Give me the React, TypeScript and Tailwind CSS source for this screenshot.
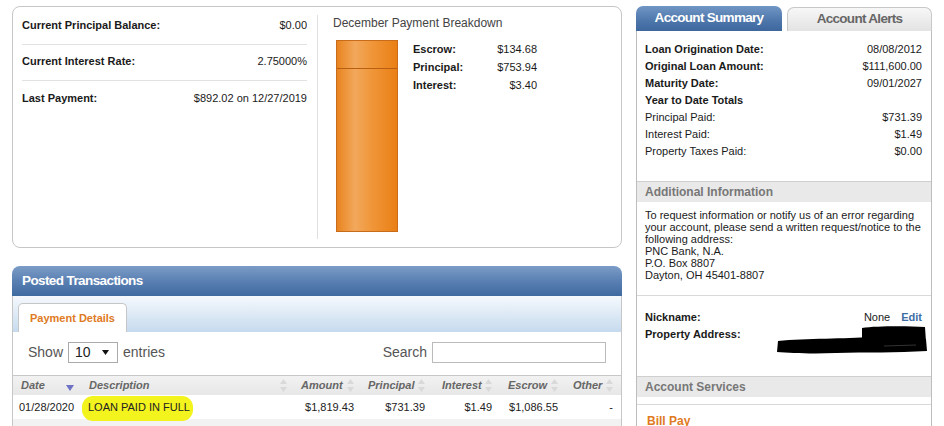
import React from 'react';

const SortBoth = () => (
  <svg width="7" height="13" viewBox="0 0 7 13" className="shrink-0">
    <path d="M3.5 0 L7 5 L0 5 Z" fill="#d9d9d9" />
    <path d="M0 8 L7 8 L3.5 13 Z" fill="#d9d9d9" />
  </svg>
);

const SortDesc = () => (
  <svg width="8" height="6" viewBox="0 0 8 6" className="shrink-0 mt-[4px]">
    <path d="M0 0 L8 0 L4 6 Z" fill="#6d72c4" />
  </svg>
);

const OVERVIEW = [
  { label: 'Current Principal Balance:', value: '$0.00' },
  { label: 'Current Interest Rate:', value: '2.75000%' },
  { label: 'Last Payment:', value: '$892.02 on 12/27/2019' },
];

const BREAKDOWN = [
  { label: 'Escrow:', value: '$134.68' },
  { label: 'Principal:', value: '$753.94' },
  { label: 'Interest:', value: '$3.40' },
];

const SUMMARY = [
  { label: 'Loan Origination Date:', value: '08/08/2012', bold: true },
  { label: 'Original Loan Amount:', value: '$111,600.00', bold: true },
  { label: 'Maturity Date:', value: '09/01/2027', bold: true },
  { label: 'Year to Date Totals', value: '', bold: true },
  { label: 'Principal Paid:', value: '$731.39', bold: false },
  { label: 'Interest Paid:', value: '$1.49', bold: false },
  { label: 'Property Taxes Paid:', value: '$0.00', bold: false },
];

const COLUMNS = [
  { name: 'Date', w: 'w-[69px]', pl: 'pl-[8px]' },
  { name: 'Description', w: 'w-[213px]', pl: 'pl-[7px]' },
  { name: 'Amount', w: 'w-[67px]', pl: 'pl-[6px]' },
  { name: 'Principal', w: 'w-[71px]', pl: 'pl-[6px]' },
  { name: 'Interest', w: 'w-[67px]', pl: 'pl-[9px]' },
  { name: 'Escrow', w: 'w-[66px]', pl: 'pl-[8px]' },
  { name: 'Other', w: 'w-[55px]', pl: 'pl-[7px]' },
];

export default function App() {
  return (
    <div className="w-[944px] h-[426px] overflow-hidden bg-white flex gap-[14px] pl-[12px] pt-[6px] font-['Liberation_Sans',Arial,sans-serif] text-[11px] text-[#1a1a1a]">
      {/* Left column */}
      <div className="w-[610px] flex flex-col gap-[18px]">
        {/* Overview card */}
        <div className="h-[242px] border border-[#c6c6c6] rounded-[8px] flex">
          <div className="w-[304px] pl-[9px] pr-[10px] pt-[2px]">
            {OVERVIEW.map((row, i) => (
              <div
                key={row.label}
                className={`h-[36px] flex items-center justify-between pb-[2px] ${
                  i < OVERVIEW.length - 1 ? 'border-b border-[#e2e2e2]' : ''
                }`}
              >
                <span className="font-bold">{row.label}</span>
                <span>{row.value}</span>
              </div>
            ))}
          </div>
          <div className="my-[8px] border-l border-[#e0e0e0] pl-[15px] pt-[1px] flex-1">
            <div className="text-[12px] leading-[14px] text-[#444]">December Payment Breakdown</div>
            <div className="flex items-start mt-[10px]">
              <div className="ml-[3px] w-[62px] h-[192px] border border-[#c86c1c] flex flex-col bg-[linear-gradient(90deg,#e9841f_0%,#f2a85c_30%,#f0983c_55%,#ea7f15_100%)]">
                <div className="h-[28px] border-b border-[#b85f12]" />
                <div className="flex-1" />
              </div>
              <div className="ml-[15px] w-[124px]">
                {BREAKDOWN.map((row) => (
                  <div key={row.label} className="flex justify-between leading-[18px]">
                    <span className="font-bold">{row.label}</span>
                    <span>{row.value}</span>
                  </div>
                ))}
              </div>
            </div>
          </div>
        </div>

        {/* Posted transactions */}
        <div className="flex-1 flex flex-col rounded-t-[8px] overflow-hidden">
          <div className="h-[30px] shrink-0 flex items-center pl-[10px] bg-[linear-gradient(180deg,#7b9cc6_0%,#5a80b3_50%,#3f6aa0_100%)] text-white font-bold text-[13.5px] tracking-[-0.6px]">
            Posted Transactions
          </div>
          <div className="flex-1 border-x border-[#c6c6c6] flex flex-col">
            <div className="h-[36px] shrink-0 flex items-end pl-[5px] bg-[linear-gradient(180deg,#f5f9fd_0%,#c6daee_100%)]">
              <div className="w-[109px] h-[29px] bg-white border border-b-0 border-[#c6c6c6] rounded-t-[5px] flex items-center justify-center text-[#e07a22] font-bold">
                Payment Details
              </div>
            </div>
            <div className="flex items-center justify-between pt-[10px] pl-[15px] pr-[15px] text-[14px] text-[#555]">
              <div className="flex items-center">
                <span>Show</span>
                <div className="ml-[5px] w-[50px] h-[21px] border border-[#aaa] flex items-center justify-between pl-[6px] pr-[8px] text-[#222]">
                  <span>10</span>
                  <svg width="7" height="5" viewBox="0 0 7 5">
                    <path d="M0 0 L7 0 L3.5 5 Z" fill="#111" />
                  </svg>
                </div>
                <span className="ml-[5px]">entries</span>
              </div>
              <div className="flex items-center">
                <span>Search</span>
                <div className="ml-[5px] w-[174px] h-[21px] border border-[#bbb]" />
              </div>
            </div>
            <div className="mt-[12px] h-[20px] flex border-t border-[#c8c8c8] bg-[linear-gradient(180deg,#f2f2f2,#e7e7e7)] text-[#666] font-bold italic">
              {COLUMNS.map((c) => (
                <div key={c.name} className={`${c.w} ${c.pl} pr-[8px] flex items-center justify-between`}>
                  <span>{c.name}</span>
                  {c.name === 'Date' ? <SortDesc /> : <SortBoth />}
                </div>
              ))}
            </div>
            <div className="h-[24px] flex items-center pt-[1px] text-[#222]">
              <div className="w-[69px] pl-[6px]">01/28/2020</div>
              <div className="w-[213px] pl-[6px] relative h-full flex items-center">
                <span className="absolute left-[0px] top-[0px] w-[111px] h-[25px] rounded-[11px] bg-[#f3f31e]" />
                <span className="relative">LOAN PAID IN FULL</span>
              </div>
              <div className="w-[67px] pr-[8px] text-right">$1,819.43</div>
              <div className="w-[71px] pr-[8px] text-right">$731.39</div>
              <div className="w-[67px] pr-[8px] text-right">$1.49</div>
              <div className="w-[66px] pr-[8px] text-right">$1,086.55</div>
              <div className="w-[55px] pr-[8px] text-right">-</div>
            </div>
            <div className="flex-1 bg-[#f2f2f2]" />
          </div>
        </div>
      </div>

      {/* Right column */}
      <div className="w-[296px] flex flex-col">
        <div className="h-[25px] flex items-end gap-[5px] font-bold text-[13.5px] tracking-[-0.7px]">
          <div className="w-[146px] h-[25px] rounded-t-[7px] bg-[linear-gradient(180deg,#7096c4_0%,#4d76ab_60%,#3e689d_100%)] text-white flex items-center justify-center">
            Account Summary
          </div>
          <div className="flex-1 h-[24px] rounded-t-[7px] border border-b-0 border-[#c8c8c8] bg-[linear-gradient(180deg,#f7f7f7,#e3e3e3)] text-[#666] flex items-center justify-center">
            Account Alerts
          </div>
        </div>
        <div className="h-[4px] bg-[#3e689d]" />
        <div className="flex-1 border-x border-[#bdbdbd] flex flex-col">
          <div className="pt-[10px] pb-[21px] pl-[8px] pr-[9px]">
            {SUMMARY.map((row) => (
              <div key={row.label} className="flex justify-between leading-[17px]">
                <span className={row.bold ? 'font-bold' : ''}>{row.label}</span>
                <span>{row.value}</span>
              </div>
            ))}
          </div>
          <div className="h-[21px] border-t border-[#cfcfcf] bg-[#e9e9e9] flex items-center pl-[8px] text-[12px] font-bold text-[#777]">
            Additional Information
          </div>
          <div className="pt-[7px] pb-[14px] pl-[8px] leading-[12px] whitespace-nowrap border-b border-[#d9d9d9]">
            To request information or notify us of an error regarding
            <br />
            your account, please send a written request/notice to the
            <br />
            following address:
            <br />
            PNC Bank, N.A.
            <br />
            P.O. Box 8807
            <br />
            Dayton, OH 45401-8807
          </div>
          <div className="relative pt-[13px] pb-[33px] pl-[8px] pr-[9px]">
            <div className="flex justify-between leading-[17px]">
              <span className="font-bold">Nickname:</span>
              <span>
                None<span className="ml-[11px] font-bold text-[#3d6ea6]">Edit</span>
              </span>
            </div>
            <div className="leading-[17px] font-bold">Property Address:</div>
            <svg
              className="absolute left-[139px] top-[30px]"
              width="152"
              height="28"
              viewBox="0 0 152 28"
            >
              <path d="M86 2 C100 0 130 0 149 1 L150 16 L140 17 L120 15 L100 16 L86 15 Z" fill="#000" />
              <path d="M2 15 C30 12 70 13 95 11 C115 10 135 12 150 13 L151 25 C120 27 90 26 60 27 C35 28 15 27 1 26 Z" fill="#000" />
              <path d="M108 20 L140 19" stroke="#555" strokeWidth="0.6" />
            </svg>
          </div>
          <div className="h-[21px] border-t border-[#cfcfcf] bg-[#e9e9e9] flex items-center pl-[8px] text-[12px] font-bold text-[#777]">
            Account Services
          </div>
          <div className="h-[8px] border-b border-[#d9d9d9]" />
          <div className="pt-[9px] pl-[10px] text-[12px] font-bold text-[#e07a22] leading-[14px]">Bill Pay</div>
        </div>
      </div>
    </div>
  );
}
